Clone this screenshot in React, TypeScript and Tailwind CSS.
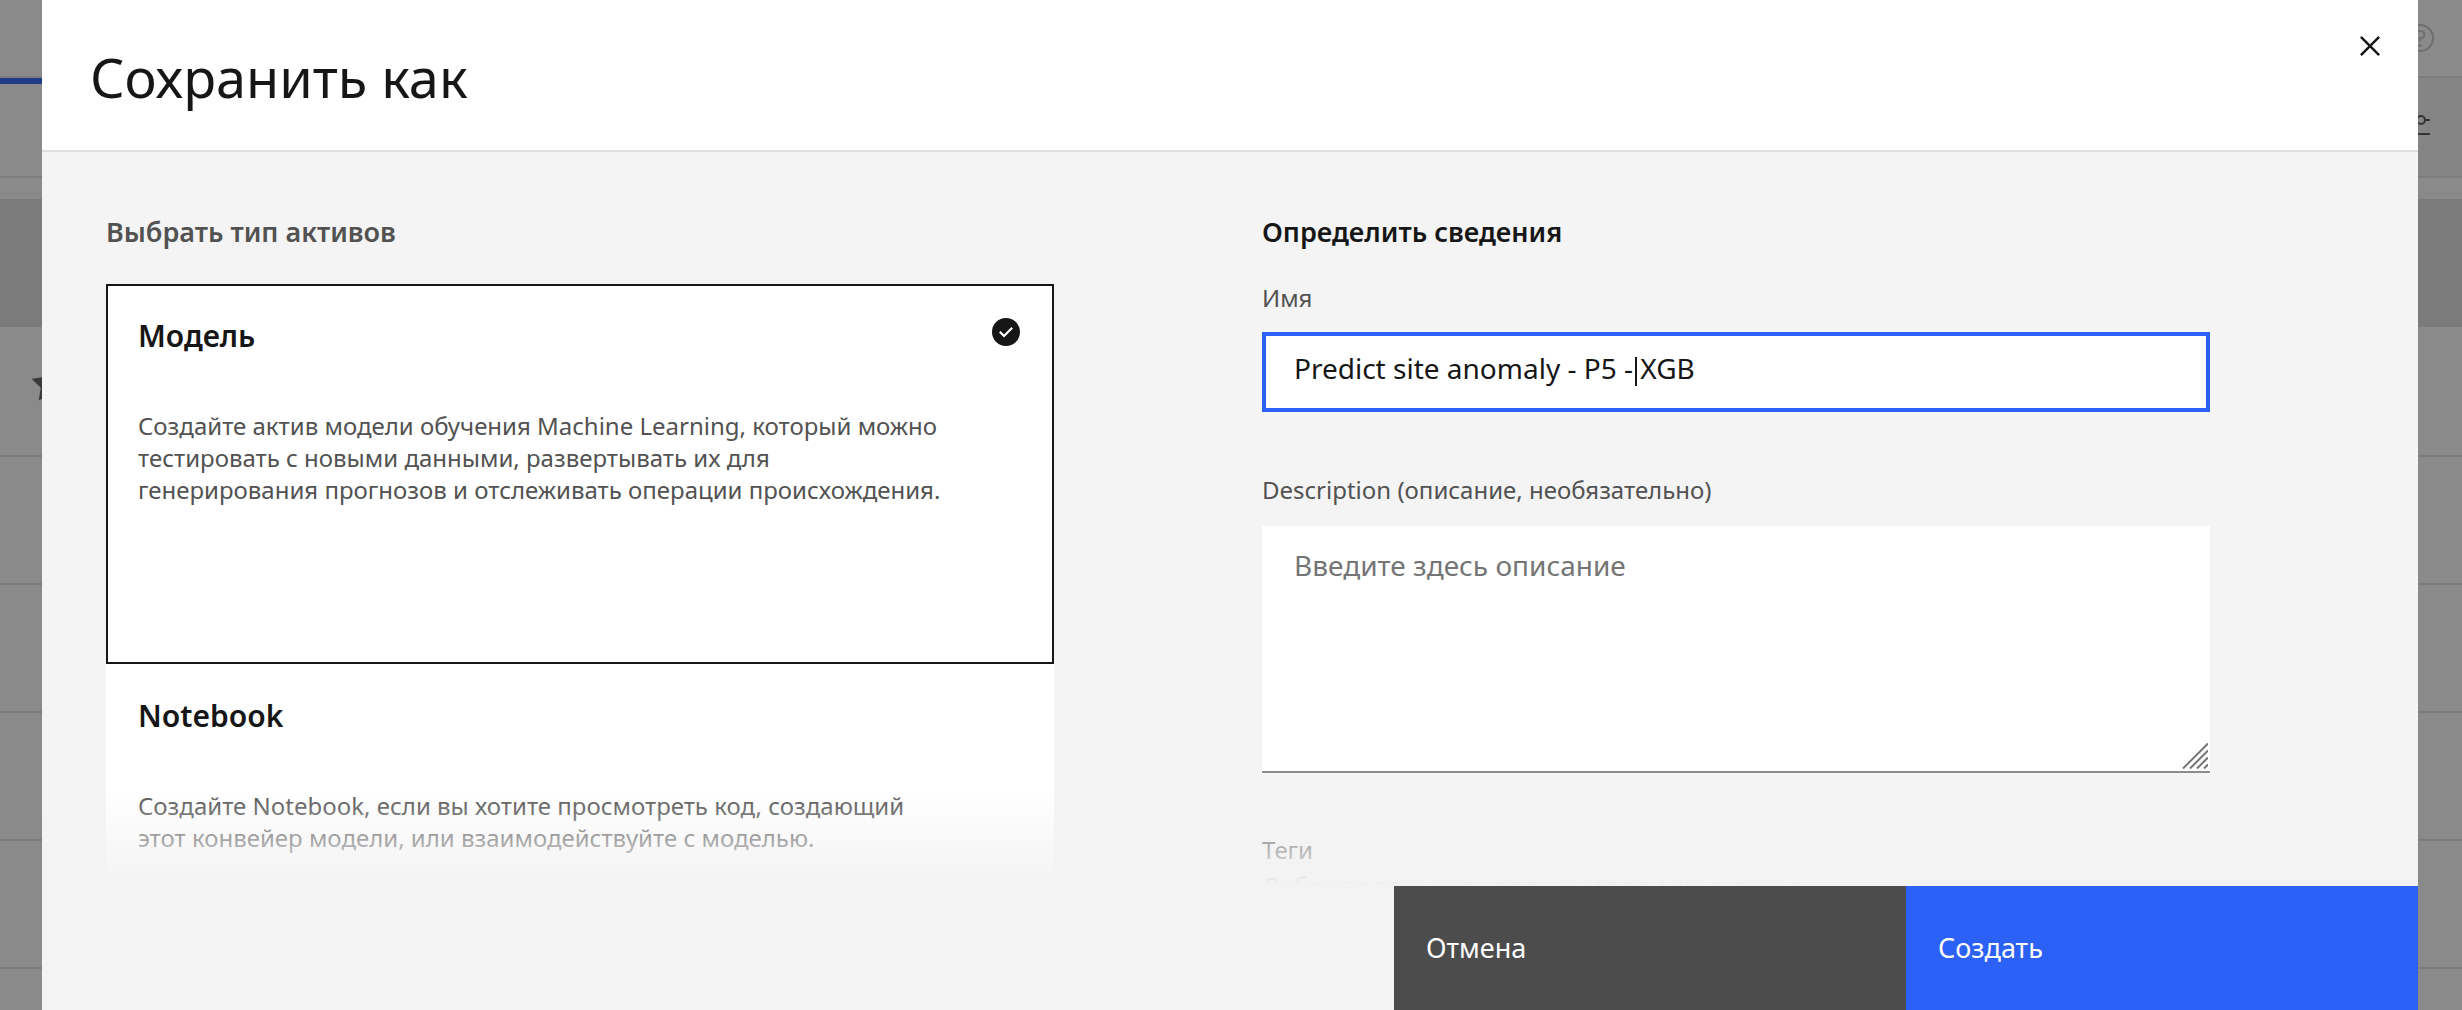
import { useState } from "react";

type Asset = { id: string; title: string; text: string };

const assets: Asset[] = [
  {
    id: "model",
    title: "Модель",
    text: "Создайте актив модели обучения Machine Learning, который можно тестировать с новыми данными, развертывать их для генерирования прогнозов и отслеживать операции происхождения.",
  },
  {
    id: "notebook",
    title: "Notebook",
    text: "Создайте Notebook, если вы хотите просмотреть код, создающий этот конвейер модели, или взаимодействуйте с моделью.",
  },
];

function CheckmarkFilled() {
  return (
    <svg viewBox="0 0 32 32" className="size-8 shrink-0" fill="currentColor" aria-hidden="true">
      <path d="M16,2A14,14,0,1,0,30,16,14,14,0,0,0,16,2ZM14,21.5908l-5-5L10.5906,15,14,18.4092,21.41,11l1.5957,1.5859Z" />
    </svg>
  );
}

function CloseIcon() {
  return (
    <svg viewBox="0 0 32 32" className="size-10" fill="currentColor" aria-hidden="true">
      <path d="M24 9.4L22.6 8 16 14.6 9.4 8 8 9.4 14.6 16 8 22.6 9.4 24 16 17.4 22.6 24 24 22.6 17.4 16 24 9.4z" />
    </svg>
  );
}

function HelpIcon() {
  return (
    <svg viewBox="0 0 32 32" className="size-8 text-[#6f6f6f]" fill="currentColor" aria-hidden="true">
      <path d="M16,2A14,14,0,1,0,30,16,14,14,0,0,0,16,2Zm0,26A12,12,0,1,1,28,16,12,12,0,0,1,16,28Z" />
      <circle cx="16" cy="23.5" r="1.5" />
      <path d="M17,8H15.5A4.49,4.49,0,0,0,11,12.5V13h2v-.5A2.5,2.5,0,0,1,15.5,10H17a2.5,2.5,0,0,1,0,5H15v4.5h2V17a4.5,4.5,0,0,0,0-9Z" />
    </svg>
  );
}

function AdjustIcon() {
  return (
    <svg viewBox="0 0 32 32" className="size-8 text-[#343434]" fill="none" stroke="currentColor" strokeWidth="2" aria-hidden="true">
      <circle cx="21" cy="9" r="4" />
      <circle cx="11" cy="23" r="4" />
      <path d="M2 9h15M25 9h5M2 23h5M15 23h15" />
    </svg>
  );
}

function StarIcon() {
  return (
    <svg viewBox="0 0 32 32" className="size-10 text-[#3a3a3a]" fill="currentColor" aria-hidden="true">
      <path d="M16,2l-4.55,9.22L1.28,12.69l7.36,7.18L6.9,30,16,25.22,25.1,30,23.36,19.87l7.36-7.17L20.55,11.22Z" />
    </svg>
  );
}

function Backdrop() {
  return (
    <div className="absolute inset-0 overflow-hidden bg-[#8a8a8a]" aria-hidden="true">
      <div className="flex h-[78px] items-center justify-end border-b-2 border-[#7d7d7d] pr-[26px]">
        <HelpIcon />
      </div>
      <div className="flex h-[100px] items-stretch justify-between border-b-2 border-[#7d7d7d]">
        <div className="w-1/4 border-t-6 border-[#1f3c88]" />
        <div className="flex w-1/4 items-center justify-end bg-[#858585] pr-[30px]">
          <AdjustIcon />
        </div>
      </div>
      <div className="mt-[21px] h-[130px] border-b-2 border-[#8a8a8a] bg-[#7b7b7b]" />
      {[0, 1, 2, 3, 4, 5].map((row) => (
        <div key={row} className="h-32 border-b-2 border-[#7d7d7d] pt-[34px] pl-[30px]">
          {row === 0 && <StarIcon />}
        </div>
      ))}
    </div>
  );
}

function AssetCard({ asset, selected, onSelect }: { asset: Asset; selected: boolean; onSelect: () => void }) {
  return (
    <label
      className={
        "relative block min-h-[380px] cursor-pointer border-2 bg-white p-[30px] " +
        (selected ? "border-[#161616]" : "border-white")
      }
    >
      <input type="radio" name="asset" className="sr-only" checked={selected} onChange={onSelect} />
      <span className="flex items-start justify-between">
        <span className="text-[30px] leading-10 font-semibold">{asset.title}</span>
        {selected && <CheckmarkFilled />}
      </span>
      <span className="mt-[54px] block max-w-[808px] text-2xl leading-8 text-[#525252]">{asset.text}</span>
    </label>
  );
}

export default function App() {
  const [selected, setSelected] = useState("model");
  const [name, setName] = useState("Predict site anomaly - P5 - XGB");
  const [description, setDescription] = useState("");
  const [edited, setEdited] = useState(false);

  return (
    <div className="relative h-screen overflow-hidden font-['Noto_Sans',sans-serif] text-[#161616]">
      <Backdrop />
      <div className="relative h-full pr-11 pl-[42px]">
        <div role="dialog" aria-labelledby="dialog-title" className="flex h-full flex-col bg-[#f4f4f4]">
          <header className="flex shrink-0 items-start justify-between border-b-2 border-[#e0e0e0] bg-white pr-7 pl-12">
            <h1 id="dialog-title" className="pt-[45px] pb-[41px] text-[54px] leading-16">
              Сохранить как
            </h1>
            <button type="button" aria-label="Закрыть" className="mt-[26px]">
              <CloseIcon />
            </button>
          </header>

          <main className="relative min-h-0 flex-1 overflow-hidden">
            <div className="grid grid-cols-2 pt-[62px] pl-16">
              <section className="pr-52">
                <h2 className="text-[27px] leading-9 font-semibold text-[#525252]">Выбрать тип активов</h2>
                <div className="mt-[34px]">
                  {assets.map((asset) => (
                    <AssetCard
                      key={asset.id}
                      asset={asset}
                      selected={asset.id === selected}
                      onSelect={() => setSelected(asset.id)}
                    />
                  ))}
                </div>
              </section>

              <section className="pr-52">
                <h2 className="text-[27px] leading-9 font-semibold">Определить сведения</h2>

                <label htmlFor="name" className="mt-8 block text-2xl leading-8 text-[#525252]">
                  Имя
                </label>
                <div className="relative mt-[18px]">
                  <input
                    id="name"
                    type="text"
                    value={name}
                    onChange={(e) => {
                      setName(e.target.value);
                      setEdited(true);
                    }}
                    className="block h-20 w-full border-4 border-[#2b61f6] bg-white px-7 pb-2 text-[28px] outline-none"
                  />
                  {!edited && <span className="absolute top-[25px] left-[373px] h-[29px] w-0.5 bg-[#161616]" />}
                </div>

                <label htmlFor="description" className="mt-[62px] block text-2xl leading-8 text-[#525252]">
                  Description (описание, необязательно)
                </label>
                <div className="relative mt-5">
                  <textarea
                    id="description"
                    value={description}
                    onChange={(e) => setDescription(e.target.value)}
                    placeholder="Введите здесь описание"
                    className="block h-[247px] w-full resize-none border-b-2 border-[#8d8d8d] bg-white px-8 pt-[19px] text-[28px] leading-10 outline-none placeholder:text-[#757575]"
                  />
                  <svg
                    viewBox="0 0 26 26"
                    className="pointer-events-none absolute right-0.5 bottom-1 size-[26px]"
                    fill="none"
                    stroke="#757575"
                    strokeWidth="2"
                    aria-hidden="true"
                  >
                    <path d="M1 25.5L26 0.5M8 25.5L26 7.5M15 25.5L26 14.5M22 25.5L26 21.5" />
                  </svg>
                </div>

                <h3 className="mt-[61px] text-2xl leading-8 text-[#525252]">Теги</h3>
                <p className="mt-1 text-2xl leading-8 text-[#6f6f6f]">Добавьте теги для упрощения поиска активов.</p>
              </section>
            </div>
            <div className="pointer-events-none absolute inset-x-0 bottom-0 h-24 bg-linear-to-b from-[#f3f3f3]/0 to-[#f3f3f3]" />
          </main>

          <footer className="flex shrink-0 justify-end bg-[#f3f3f3]">
            <button type="button" className="h-[124px] w-[512px] bg-[#4c4c4c] px-8 text-left text-[27px] text-white">
              Отмена
            </button>
            <button type="button" className="h-[124px] w-[512px] bg-[#2b61f6] px-8 text-left text-[27px] text-white">
              Создать
            </button>
          </footer>
        </div>
      </div>
    </div>
  );
}
